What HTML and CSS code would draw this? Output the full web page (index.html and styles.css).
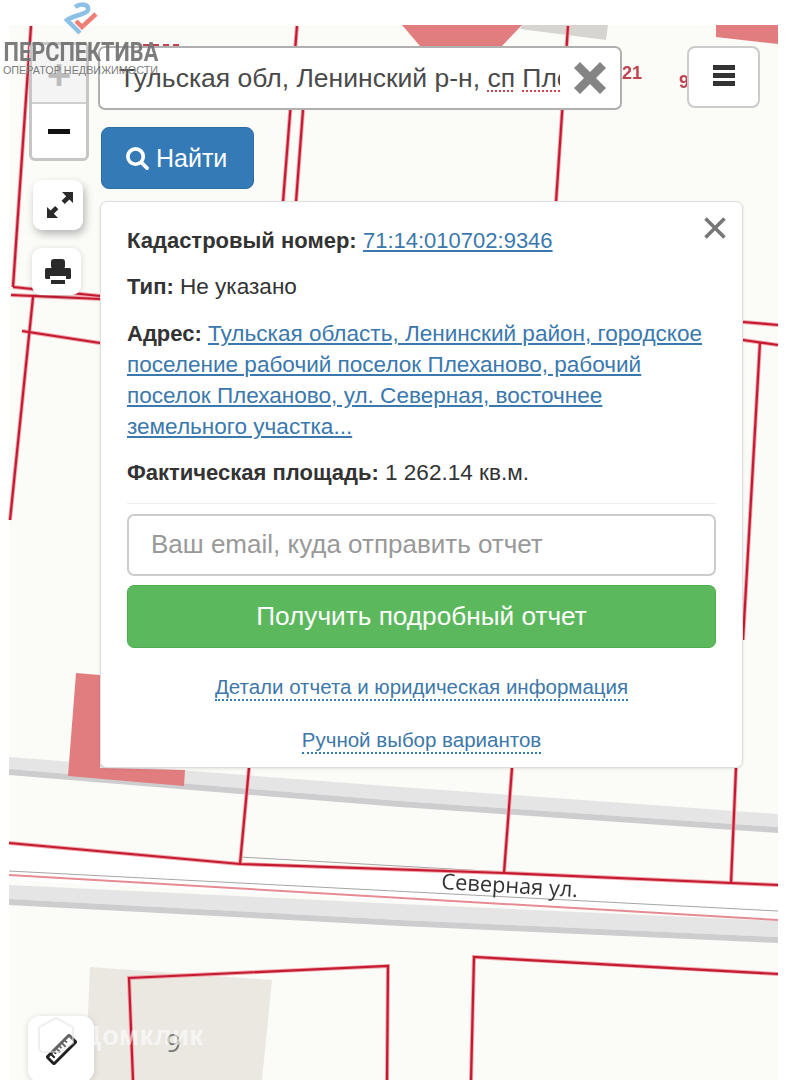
FILE: index.html
```html
<!DOCTYPE html>
<html lang="ru">
<head>
<meta charset="utf-8">
<title>Перспектива</title>
<link rel="stylesheet" href="styles.css">
</head>
<body>
<main class="screen">
  <svg class="map" viewBox="0 0 787 1080" width="787" height="1080" aria-hidden="true">
    <defs>
      <g id="lines">
        <polyline points="31,26 13,287"/>
        <polyline points="11,295 101,299"/>
        <polyline points="13,287 100,296"/>
        <polyline points="33,297 10,520"/>
        <polyline points="22,331 100,343"/>
        <polyline points="297,26 283,202"/>
        <polyline points="303,110 296,202"/>
        <polyline points="568,26 556,202"/>
        <polyline points="743,322 778,325"/>
        <polyline points="743,340 778,345"/>
        <polyline points="760,342 743,640"/>
        <polyline points="249,768 240,864"/>
        <polyline points="512,768 504,873"/>
        <polyline points="736,768 731,883"/>
        <polyline points="9,843 240,864 504,873 731,883 778,885"/>
        <polyline points="133,1080 129,978 388,966 387,1080"/>
        <polyline points="471,1080 474,957 778,974"/>
      </g>
    </defs>
    <rect class="land" x="9" y="25" width="769" height="1055"/>
    <polygon class="plot-pink" points="402,25 522,25 502,46 420,46"/>
    <polygon class="plot-grey" points="522,25 608,25 606,40 520,29"/>
    <polygon class="plot-pink" points="716,25 778,25 778,44 716,37"/>
    <polygon class="road-white" points="9,843 240,864 778,885 778,920 9,880"/>
    <polygon class="road-top" points="9,757 400,787 778,814 778,827 400,801 9,769"/>
    <polygon class="road-bottom" points="9,769 400,801 778,827 778,833 400,807 9,775"/>
    <polygon class="road-top" points="9,885 400,904 778,921 778,937 400,920 9,899"/>
    <polygon class="road-bottom" points="9,899 400,920 778,937 778,943 400,926 9,905"/>
    <polygon class="plot-pink" points="76,673 100,675 100,768 185,770 184,786 68,776"/>
    <polygon class="building" points="90,967 272,980 262,1080 85,1080"/>
    <line class="thin" x1="240" y1="857" x2="504" y2="872"/>
    <line class="thin" x1="9" y1="871" x2="778" y2="911"/>
    <line class="faded" x1="9" y1="875" x2="778" y2="920"/>
    <line class="cut-num" x1="143" y1="45" x2="182" y2="45"/>
    <use href="#lines" class="parcel-halo"/>
    <use href="#lines" class="parcel"/>
    <text class="map-num" x="622" y="79">21</text>
    <text class="map-num" x="679" y="88">9</text>
    <text class="map-house" x="166" y="1052">9</text>
    <text class="street" transform="translate(441 889) rotate(3.4)">Северная ул.</text>
  </svg>

  <div class="zoom-ctl">
    <span class="zoom-btn zoom-plus">+</span>
    <span class="zoom-btn zoom-minus"></span>
  </div>

  <button class="tool tool-expand" aria-label="Во весь экран">
    <svg viewBox="0 0 28 28" width="28" height="28"><path d="M16 1h11v11l-3.6-3.6-4.6 4.6-3.2-3.2 4.6-4.6zM12 27H1V16l3.6 3.6 4.6-4.6 3.2 3.2-4.6 4.6z"/></svg>
  </button>
  <button class="tool tool-print" aria-label="Печать">
    <svg viewBox="0 0 26 26" width="26" height="26"><rect x="6" y="0" width="14" height="10" rx="3"/><rect x="0" y="9" width="26" height="11" rx="1.5"/><rect class="slot" x="5" y="17" width="16" height="3"/><rect x="6" y="21" width="14" height="4"/></svg>
  </button>
  <button class="tool tool-ruler" aria-label="Линейка">
    <svg viewBox="0 0 32 32" width="31" height="31"><g transform="rotate(-45 16 16)"><rect class="ruler-body" x="0" y="11" width="32" height="10" rx="1"/><path class="ruler-ticks" d="M5 12v5M9 12v3M13 12v5M17 12v3M21 12v5M25 12v3"/></g></svg>
  </button>

  <div class="search">
    <span class="search-text">Тульская обл, Ленинский р-н, <span class="spell">сп</span> <span class="spell">Плеханово</span></span>
    <svg class="search-x" viewBox="0 0 38 38" width="38" height="38"><path d="M3 9l6-6 10 10 10-10 6 6-10 10 10 10-6 6-10-10-10 10-6-6 10-10z"/></svg>
  </div>
  <button class="menu" aria-label="Меню"><span></span><span></span><span></span></button>
  <button class="find">
    <svg viewBox="0 0 26 26" width="25" height="25"><circle cx="11" cy="11" r="8"/><path d="M17 17l6 6"/></svg>
    <span>Найти</span>
  </button>

  <section class="card">
    <svg class="card-close" viewBox="0 0 24 24" width="24" height="24"><path d="M2.5 2.5l19 19M21.5 2.5l-19 19"/></svg>
    <p><b>Кадастровый номер:</b> <a class="num" href="#">71:14:010702:9346</a></p>
    <p><b>Тип:</b> Не указано</p>
    <p><b>Адрес:</b> <a href="#">Тульская область, Ленинский район, городское поселение рабочий поселок Плеханово, рабочий поселок Плеханово, ул. Северная, восточнее земельного участка...</a></p>
    <p><b>Фактическая площадь:</b> 1 262.14 кв.м.</p>
    <hr>
    <input class="email" type="text" placeholder="Ваш email, куда отправить отчет">
    <button class="report">Получить подробный отчет</button>
    <a class="dotted first" href="#">Детали отчета и юридическая информация</a>
    <a class="dotted" href="#">Ручной выбор вариантов</a>
  </section>

  <div class="brand">
    <svg class="brand-mark" viewBox="0 0 34 34" width="34" height="34">
      <path class="mark-blue" d="M11 5C17 1 25 2 24 8 23 12 8 14 3 18L16 31"/>
      <path class="mark-red" d="M12 19l6 6 14-13"/>
    </svg>
    <div class="brand-name">ПЕРСПЕКТИВА</div>
    <div class="brand-sub">ОПЕРАТОР НЕДВИЖИМОСТИ</div>
  </div>

  <div class="watermark">
    <svg viewBox="0 0 36 38" width="36" height="38"><path d="M18 1 35 10V26L22 35H6Q1 35 1 30V10z"/></svg>
    <span>Домклик</span>
  </div>
</main>
</body>
</html>
```
FILE: styles.css
```css
* { box-sizing: border-box; }
html, body { margin: 0; padding: 0; background: #fff; }
body { font-family: "Liberation Sans", Arial, sans-serif; color: #333; }
.screen { position: relative; width: 787px; height: 1080px; overflow: hidden; background: #fff; }

.map { position: absolute; left: 0; top: 0; display: block; filter: blur(.4px); }
.land { fill: #fbfbf8; }
.plot-pink { fill: #e27d7f; }
.plot-grey { fill: #d6d5d0; }
.building { fill: #ebe8e2; }
.road-white { fill: #fff; }
.road-top { fill: #e5e5e6; }
.road-bottom { fill: #cdcdcf; }
.thin { stroke: #a5a5a5; stroke-width: 1; }
.faded { stroke: #e58c92; stroke-width: 2; }
.cut-num { stroke: #c2434f; stroke-width: 2; stroke-dasharray: 6 4; }
.parcel-halo { fill: none; stroke: #f0a3a8; stroke-width: 4; }
.parcel { fill: none; stroke: #c41a32; stroke-width: 2.2; }
.map-num { font: bold 18px "Liberation Sans", sans-serif; fill: #c2434f; }
.map-house { font: 26px "Open Sans", sans-serif; fill: #777; }
.street { font: 21.8px "Open Sans", sans-serif; fill: #333; }

.zoom-ctl { position: absolute; left: 29px; top: 42px; width: 60px; height: 119px; display: flex; flex-direction: column; border: 3px solid #c6c6c6; border-radius: 6px; background: #fff; overflow: hidden; }
.zoom-btn { flex: 1 1 0; min-height: 0; display: flex; align-items: center; justify-content: center; }
.zoom-plus { background: #f4f4f4; color: #bbb; font: bold 42px/1 "Liberation Sans", sans-serif; border-bottom: 2px solid #cfcfcf; padding-top: 3px; }
.zoom-minus::before { content: ""; width: 22px; height: 5px; background: #111; }

.tool { position: absolute; padding: 0; border: 0; background: #fff; border-radius: 9px; display: flex; align-items: center; justify-content: center; box-shadow: 2px 4px 8px rgba(0,0,0,.28); }
.tool svg { fill: #2a2a2a; }
.tool .slot { fill: #fff; }
.tool-expand { left: 33px; top: 180px; width: 50px; height: 50px; padding-left: 3px; }
.tool-print { left: 32px; top: 248px; width: 49px; height: 47px; box-shadow: 0 1px 6px rgba(0,0,0,.15); padding-left: 3px; }
.tool-ruler { left: 28px; top: 1016px; width: 66px; height: 66px; border-radius: 12px; box-shadow: 0 1px 6px rgba(0,0,0,.15); }
.tool .ruler-body { fill: #fff; stroke: #222; stroke-width: 3; }
.tool .ruler-ticks { fill: none; stroke: #222; stroke-width: 2; }

.search { position: absolute; left: 98px; top: 46px; width: 524px; height: 64px; padding: 0 11px 0 19px; display: flex; align-items: center; gap: 11px; background: #fff; border: 2px solid #b0b0b0; border-radius: 7px; }
.search-text { flex: 1; min-width: 0; overflow: hidden; white-space: nowrap; font-size: 26.5px; color: #4a4a4a; }
.spell { text-decoration: underline dotted #d9444c; text-decoration-thickness: 2px; text-underline-offset: 4px; }
.search-x { fill: #848484; flex: none; }

.menu { position: absolute; left: 687px; top: 46px; width: 73px; height: 62px; background: #fff; border: 2px solid #ccc; border-radius: 8px; display: flex; flex-direction: column; align-items: center; justify-content: flex-start; gap: 3px; padding: 17px 0 0; }
.menu span { display: block; width: 22px; height: 5px; background: #333; }

.find { position: absolute; left: 101px; top: 127px; width: 153px; height: 62px; border: 1px solid #2e6da4; border-radius: 8px; background: #337ab7; color: #fff; font: 25px "Liberation Sans", sans-serif; display: flex; align-items: center; gap: 6px; padding: 0 0 0 23px; }
.find svg { fill: none; stroke: #fff; stroke-width: 3.8; stroke-linecap: round; }

.card { position: absolute; left: 100px; top: 201px; width: 643px; height: 567px; padding: 23px 26px 0; background: #fff; border: 1px solid #ddd; border-radius: 7px; box-shadow: 0 1px 3px rgba(0,0,0,.1); font-size: 22.55px; line-height: 31px; display: flex; flex-direction: column; }
.card p { margin: 0 0 15.4px; }
.card p:nth-of-type(4) { margin-bottom: 14.4px; }
.card b { font-size: 22px; }
.card a { color: #3a78ad; text-decoration: underline; }
.card a.num { font-size: 22px; }
.card-close { position: absolute; right: 15px; top: 14px; fill: none; stroke: #777; stroke-width: 3.6; }
.card hr { width: 100%; margin: 0 0 10px; border: 0; border-top: 1px solid #eee; }
.email { width: 100%; height: 62px; flex: none; padding: 0 22px; border: 2px solid #ccc; border-radius: 7px; font: 26px "Liberation Sans", sans-serif; color: #555; background: #fff; }
.email::placeholder { color: #999; opacity: 1; }
.report { width: 100%; height: 63px; flex: none; margin-top: 9px; border: 1px solid #4cae4c; border-radius: 7px; background: #5cb85c; color: #fff; font: 26.2px "Liberation Sans", sans-serif; }
.card .dotted { align-self: center; color: #3d78a9; text-decoration: none; border-bottom: 2px dotted #337ab7; line-height: 24px; font-size: 20.5px; margin-top: 27px; }

.brand { position: absolute; left: 0; top: 2px; width: 161px; display: flex; flex-direction: column; align-items: center; }
.mark-blue { fill: none; stroke: #8cc0e4; stroke-width: 4.5; }
.mark-red { fill: none; stroke: #ef7f76; stroke-width: 4.5; }
.brand-name { font: bold 25px/20px "Roboto", sans-serif; color: #6f6f6f; opacity: .9; margin-top: 7px; white-space: nowrap; transform: scaleX(.87); }
.brand-sub { font: 10.8px/12px "Liberation Sans", sans-serif; color: #7b7b7b; white-space: nowrap; margin-top: 1px; }

.watermark { position: absolute; left: 38px; top: 1017px; display: flex; align-items: center; gap: 8px; pointer-events: none; }
.watermark svg { fill: rgba(255,255,255,.3); stroke: rgba(225,225,225,.55); stroke-width: 2; }
.watermark span { font: bold 27px/36px "Liberation Sans", sans-serif; color: rgba(255,255,255,.6); letter-spacing: .7px; }
```
